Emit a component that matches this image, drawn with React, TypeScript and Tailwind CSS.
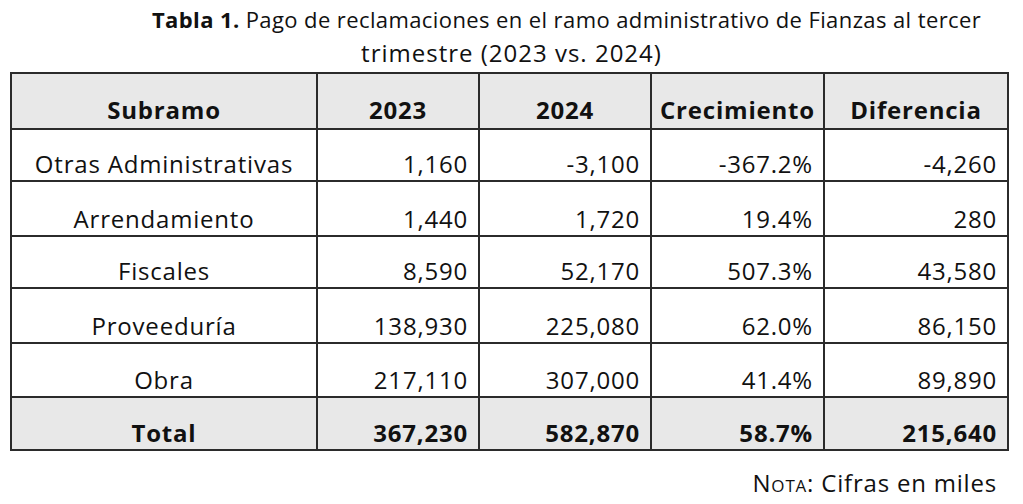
const rows = [
  { name: 'Otras Administrativas', a: '1,160', b: '-3,100', c: '-367.2%', d: '-4,260', h: 'h-[52px]' },
  { name: 'Arrendamiento', a: '1,440', b: '1,720', c: '19.4%', d: '280', h: 'h-[55px]' },
  { name: 'Fiscales', a: '8,590', b: '52,170', c: '507.3%', d: '43,580', h: 'h-[52px]' },
  { name: 'Proveeduría', a: '138,930', b: '225,080', c: '62.0%', d: '86,150', h: 'h-[55px]' },
  { name: 'Obra', a: '217,110', b: '307,000', c: '41.4%', d: '89,890', h: 'h-[54px]' },
];

const cell = 'border-2 border-[#2b2b2b] align-bottom pb-[2px] leading-[28px]';
const num = `${cell} text-right pr-[10px]`;

export default function App() {
  return (
    <div className="w-[1023px] h-[504px] bg-white text-[#111] font-['Open_Sans',sans-serif] overflow-hidden">
      <div className="pt-[3px] text-center">
        <div className="pl-[110px] text-[22px] leading-[33px] tracking-[0.4px]">
          <span className="font-bold">Tabla 1.</span> Pago de reclamaciones en el ramo administrativo de Fianzas al tercer
        </div>
        <div className="text-[24px] leading-[34px] tracking-[1px]">trimestre (2023 vs. 2024)</div>
      </div>

      <table className="ml-[10px] mt-[2px] border-collapse table-fixed w-[997px] text-[24px] tracking-[0.8px]">
        <colgroup>
          <col className="w-[306px]" />
          <col className="w-[162px]" />
          <col className="w-[172px]" />
          <col className="w-[173px]" />
          <col className="w-[184px]" />
        </colgroup>
        <thead>
          <tr className="h-[56px] bg-[#e8e8e8] font-bold">
            <th className={`${cell} text-center pb-[4px]`}>Subramo</th>
            <th className={`${cell} text-center pb-[4px]`}>2023</th>
            <th className={`${cell} text-center pb-[4px]`}>2024</th>
            <th className={`${cell} text-center pb-[4px]`}>Crecimiento</th>
            <th className={`${cell} text-center pb-[4px]`}>Diferencia</th>
          </tr>
        </thead>
        <tbody>
          {rows.map((r) => (
            <tr key={r.name} className={r.h}>
              <td className={`${cell} text-center`}>{r.name}</td>
              <td className={num}>{r.a}</td>
              <td className={num}>{r.b}</td>
              <td className={num}>{r.c}</td>
              <td className={num}>{r.d}</td>
            </tr>
          ))}
          <tr className="h-[53px] bg-[#e8e8e8] font-bold">
            <td className={`${cell} text-center`}>Total</td>
            <td className={num}>367,230</td>
            <td className={num}>582,870</td>
            <td className={num}>58.7%</td>
            <td className={num}>215,640</td>
          </tr>
        </tbody>
      </table>

      <div className="w-[997px] text-right text-[24px] tracking-[0.8px] leading-[28px] mt-[18px]">
        <span className="[font-variant:small-caps]">Nota</span>: Cifras en miles
      </div>
    </div>
  );
}
